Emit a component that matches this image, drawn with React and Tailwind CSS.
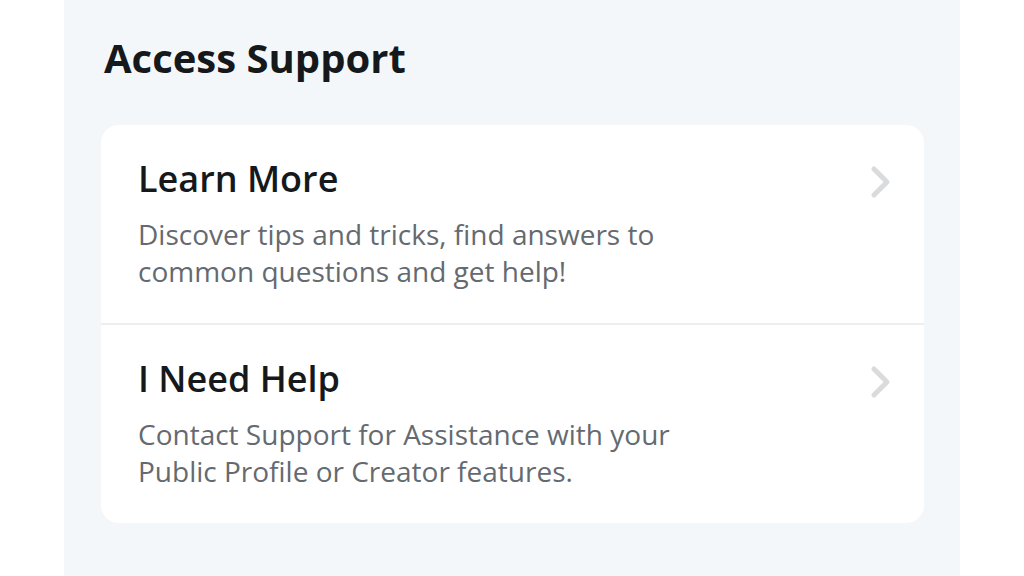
import React from "react";

const Chevron = () => (
  <svg width="26" height="36" viewBox="0 0 26 36" fill="none" className="shrink-0">
    <path d="M6 5 L19 18 L6 31" stroke="#d9dbdd" strokeWidth="5" strokeLinecap="round" strokeLinejoin="round" />
  </svg>
);

const Row = ({ title, lines, border }) => (
  <div className={`flex items-start justify-between pl-[37px] pr-[30px] ${border ? "border-b-2 border-[#eceef0]" : ""}`}>
    <div className="pt-[32px] pb-[33px]">
      <div className="text-[36px] leading-[44px] font-semibold text-[#16191c]">{title}</div>
      <div className="mt-[15px] text-[28px] leading-[37px] text-[#656a70]">
        {lines.map((l) => (
          <div key={l}>{l}</div>
        ))}
      </div>
    </div>
    <div className="pt-[39px]">
      <Chevron />
    </div>
  </div>
);

export default function App() {
  return (
    <div className="w-[1024px] h-[576px] bg-white overflow-hidden" style={{ fontFamily: "'Open Sans', 'Noto Sans', sans-serif" }}>
      <div className="ml-[64px] w-[896px] h-[576px] bg-[#f4f7fa] pt-[32px]">
        <h1 className="pl-[40px] text-[40px] leading-[52px] font-bold text-[#16191c]">Access Support</h1>
        <div className="mt-[41px] ml-[37px] w-[823px] bg-white rounded-[18px]">
          <Row
            title="Learn More"
            lines={["Discover tips and tricks, find answers to", "common questions and get help!"]}
            border
          />
          <Row
            title="I Need Help"
            lines={["Contact Support for Assistance with your", "Public Profile or Creator features."]}
          />
        </div>
      </div>
    </div>
  );
}
